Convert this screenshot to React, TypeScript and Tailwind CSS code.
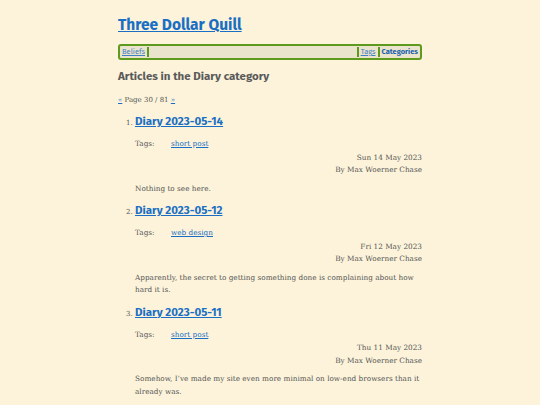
import React from "react";

const posts = [
  {
    n: 1,
    title: "Diary 2023-05-14",
    tag: "short post",
    date: "Sun 14 May 2023",
    body: "Nothing to see here.",
  },
  {
    n: 2,
    title: "Diary 2023-05-12",
    tag: "web design",
    date: "Fri 12 May 2023",
    body: "Apparently, the secret to getting something done is complaining about how hard it is.",
  },
  {
    n: 3,
    title: "Diary 2023-05-11",
    tag: "short post",
    date: "Thu 11 May 2023",
    body: "Somehow, I\u2019ve made my site even more minimal on low-end browsers than it already was.",
  },
];

const serif = "font-['Roboto_Slab','DejaVu_Serif',serif]";
const sans = "font-['Fira_Sans','Open_Sans','Noto_Sans',sans-serif]";

export default function App() {
  return (
    <div className="min-h-[405px] bg-[#fcf3da] text-[#555555]">
      <div className="mx-auto w-[304px] pt-[13px]">
        <h1 className={`${sans} text-[15.5px] font-bold leading-[24px]`}>
          <a href="#" className="text-[#1a6fc4] underline">Three Dollar Quill</a>
        </h1>
        <nav
          className={`${sans} mt-[7px] flex h-[16px] items-stretch rounded-[3px] border-2 border-[#5e9a1e] bg-[#ebe4cc] px-[2px] text-[7.5px] leading-[12px]`}
        >
          <a href="#" className="flex items-center pr-[2px] text-[#3f7fc4] underline">Beliefs</a>
          <div className="flex-1 border-x-2 border-[#5e9a1e] my-[1px]" />
          <a href="#" className="flex items-center border-r-2 border-[#5e9a1e] px-[2px] my-[1px] text-[#3f7fc4] underline">Tags</a>
          <a href="#" className="flex items-center pl-[2px] font-bold text-[#1a5fae]">Categories</a>
        </nav>
        <h2 className={`${sans} mt-[7px] text-[11.5px] font-bold leading-[18px] text-[#5a5a5a]`}>
          Articles in the Diary category
        </h2>
        <p className={`${serif} mt-[10px] text-[7px] leading-[10px]`}>
          <a href="#" className="text-[#1a6fc4] underline">«</a> Page 30 / 81{" "}
          <a href="#" className="text-[#1a6fc4] underline">»</a>
        </p>
        <ol className={`${serif} mt-[7px] list-decimal pl-[17px] text-[7.3px] leading-[12.5px] marker:text-[7px]`}>
          {posts.map((p) => (
            <li key={p.n} className="mb-[6px]">
              <h3 className={`${sans} inline text-[11.5px] font-bold leading-[18px]`}>
                <a href="#" className="text-[#1a6fc4] underline">{p.title}</a>
              </h3>
              <div className="mt-[8px] flex">
                <span className="w-[36px]">Tags:</span>
                <a href="#" className="text-[#1a6fc4] underline">{p.tag}</a>
              </div>
              <div className="mt-[1px] text-right">
                <div>{p.date}</div>
                <div>By Max Woerner Chase</div>
              </div>
              <p className="mt-[6px]">{p.body}</p>
            </li>
          ))}
        </ol>
      </div>
    </div>
  );
}
